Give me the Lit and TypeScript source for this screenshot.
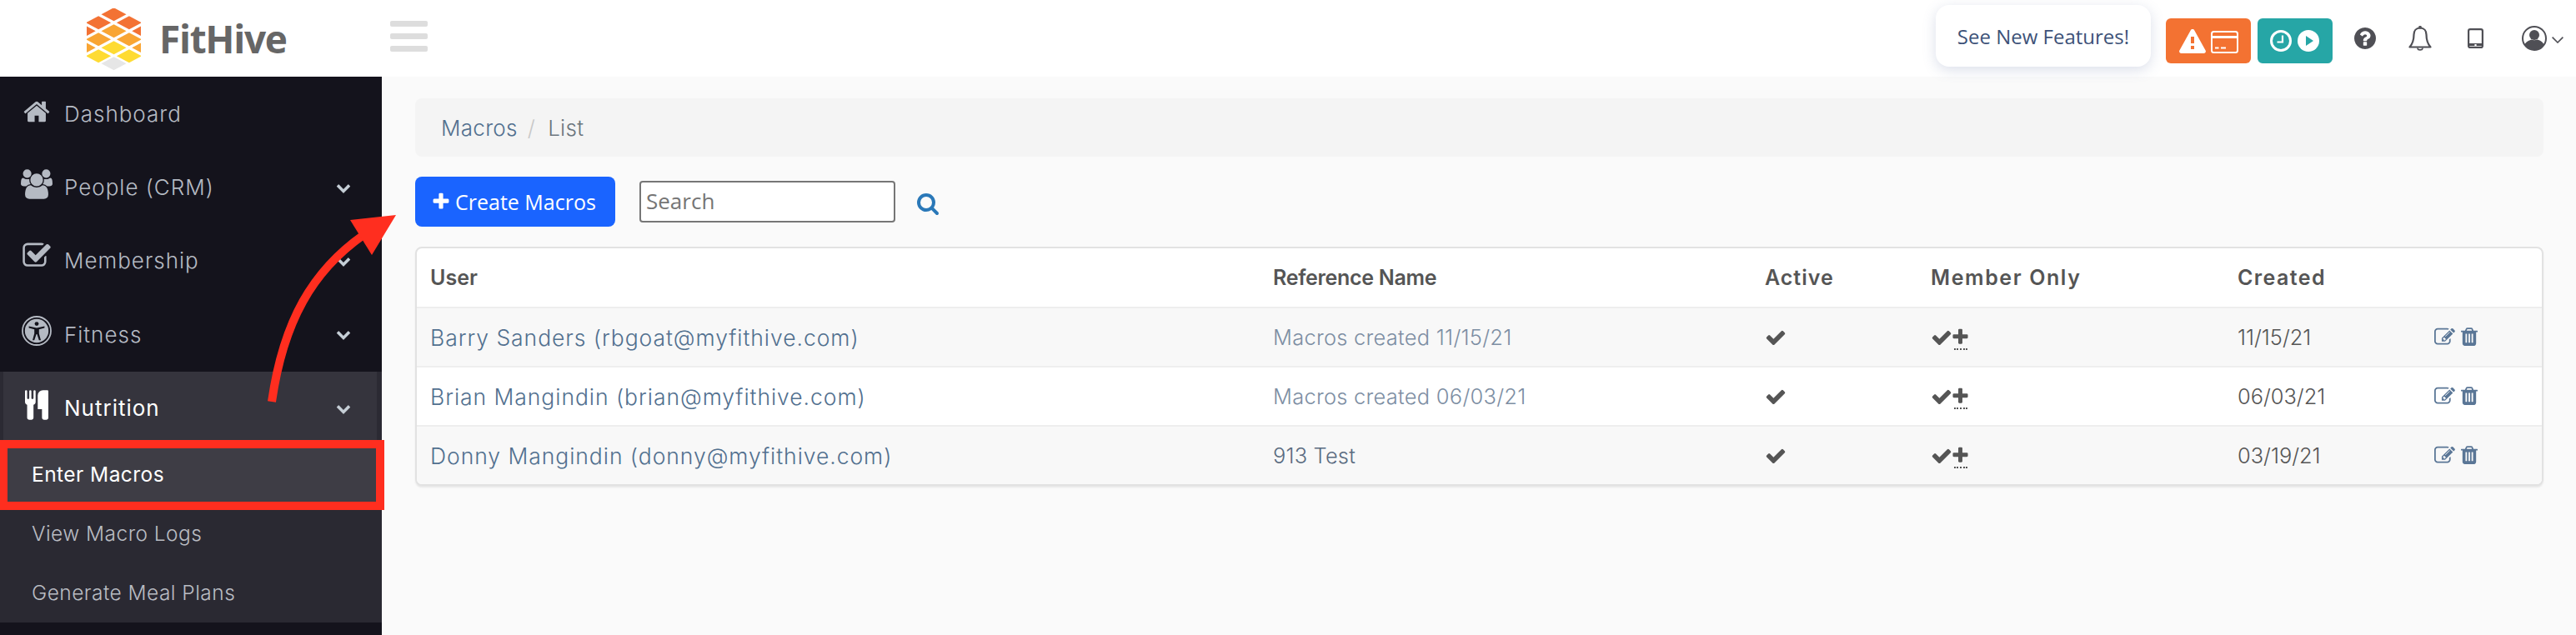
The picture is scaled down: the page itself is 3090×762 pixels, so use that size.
import { LitElement, html, svg, css } from "lit";
import { customElement } from "lit/decorators.js";

const P = {
  check: "M1671 566q0 40-28 68l-724 724-136 136q-28 28-68 28t-68-28l-136-136-362-362q-28-28-28-68t28-68l136-136q28-28 68-28t68 28l294 295 656-657q28-28 68-28t68 28l136 136q28 28 28 68z",
  plus: "M1600 736v192q0 40-28 68t-68 28h-416v416q0 40-28 68t-68 28h-192q-40 0-68-28t-28-68v-416h-416q-40 0-68-28t-28-68v-192q0-40 28-68t68-28h416v-416q0-40 28-68t68-28h192q40 0 68 28t28 68v416h416q40 0 68 28t28 68z",
  chev: "M1683 808l-742 741q-19 19-45 19t-45-19l-742-741q-19-19-19-45.5t19-45.5l166-165q19-19 45-19t45 19l531 531 531-531q19-19 45-19t45 19l166 165q19 19 19 45.5t-19 45.5z",
  home: "M1472 992v480q0 26-19 45t-45 19h-384v-384h-256v384h-384q-26 0-45-19t-19-45v-480q0-1 .5-3t.5-3l575-474 575 474q1 2 1 6zm223-69l-62 74q-8 9-21 11h-3q-13 0-21-7l-692-577-692 577q-12 8-24 7-13-2-21-11l-62-74q-8-10-7-23.5t11-21.5l719-599q32-26 76-26t76 26l244 204v-195q0-14 9-23t23-9h192q14 0 23 9t9 23v408l219 182q10 8 11 21.5t-7 23.5z",
  users: "M593 896q-162 5-265 128h-134q-82 0-138-40.5t-56-118.5q0-353 124-353 6 0 43.5 21t97.5 42.5 119 21.5q67 0 133-23-5 37-5 66 0 139 81 256zm1071 637q0 120-73 189.5t-194 69.5h-874q-121 0-194-69.5t-73-189.5q0-53 3.5-103.5t14-109 26.5-108.5 43-97.5 62-81 85.5-53.5 111.5-20q10 0 43 21.5t73 48 107 48 135 21.5 135-21.5 107-48 73-48 43-21.5q61 0 111.5 20t85.5 53.5 62 81 43 97.5 26.5 108.5 14 109 3.5 103.5zm-1024-1277q0 106-75 181t-181 75-181-75-75-181 75-181 181-75 181 75 75 181zm704 384q0 159-112.5 271.5t-271.5 112.5-271.5-112.5-112.5-271.5 112.5-271.5 271.5-112.5 271.5 112.5 112.5 271.5zm576 225q0 78-56 118.5t-138 40.5h-134q-103-123-265-128 81-117 81-256 0-29-5-66 66 23 133 23 59 0 119-21.5t97.5-42.5 43.5-21q124 0 124 353zm-128-609q0 106-75 181t-181 75-181-75-75-181 75-181 181-75 181 75 75 181z",
  checkSq: "M1472 930v318q0 119-84.5 203.5t-203.5 84.5h-832q-119 0-203.5-84.5t-84.5-203.5v-832q0-119 84.5-203.5t203.5-84.5h832q63 0 117 25 15 7 18 23 3 17-9 29l-49 49q-10 10-23 10-3 0-9-2-23-6-45-6h-832q-66 0-113 47t-47 113v832q0 66 47 113t113 47h832q66 0 113-47t47-113v-254q0-13 9-22l64-64q10-10 23-10 6 0 12 3 20 8 20 29zm231-489l-814 814q-24 24-57 24t-57-24l-430-430q-24-24-24-57t24-57l110-110q24-24 57-24t57 24l263 263 647-647q24-24 57-24t57 24l110 110q24 24 24 57t-24 57z",
  cutlery: "M640 64v640q0 61-35.5 111t-92.5 70v779q0 52-38 90t-90 38h-128q-52 0-90-38t-38-90v-779q-57-20-92.5-70t-35.5-111v-640q0-26 19-45t45-19 45 19 19 45v416q0 26 19 45t45 19 45-19 19-45v-416q0-26 19-45t45-19 45 19 19 45v416q0 26 19 45t45 19 45-19 19-45v-416q0-26 19-45t45-19 45 19 19 45zm768 0v1600q0 52-38 90t-90 38h-128q-52 0-90-38t-38-90v-512h-224q-13 0-22.5-9.5t-9.5-22.5v-800q0-132 94-226t226-94h256q26 0 45 19t19 45z",
  search: "M1216 832q0-185-131.5-316.5t-316.5-131.5-316.5 131.5-131.5 316.5 131.5 316.5 316.5 131.5 316.5-131.5 131.5-316.5zm512 832q0 52-38 90t-90 38q-54 0-90-38l-343-342q-179 124-399 124-143 0-273.5-55.5t-225-150-150-225-55.5-273.5 55.5-273.5 150-225 225-150 273.5-55.5 273.5 55.5 225 150 150 225 55.5 273.5q0 220-124 399l343 343q37 37 37 90z",
  question: "M1024 1376v-192q0-14-9-23t-23-9h-192q-14 0-23 9t-9 23v192q0 14 9 23t23 9h192q14 0 23-9t9-23zm256-672q0-88-55.5-163t-138.5-116-170-41q-243 0-371 213-15 24 8 42l132 100q7 6 19 6 16 0 25-12 53-68 86-92 34-24 86-24 48 0 85.5 26t37.5 59q0 38-20 61t-68 45q-63 28-115.5 86.5t-52.5 125.5v36q0 14 9 23t23 9h192q14 0 23-9t9-23q0-19 21.5-49.5t54.5-49.5q32-18 49-28.5t46-35 44.5-48 28-60.5 12.5-81zm384 192q0 209-103 385.5t-279.5 279.5-385.5 103-385.5-103-279.5-279.5-103-385.5 103-385.5 279.5-279.5 385.5-103 385.5 103 279.5 279.5 103 385.5z",
  trash: "M704 1376v-704q0-14-9-23t-23-9h-64q-14 0-23 9t-9 23v704q0 14 9 23t23 9h64q14 0 23-9t9-23zm256 0v-704q0-14-9-23t-23-9h-64q-14 0-23 9t-9 23v704q0 14 9 23t23 9h64q14 0 23-9t9-23zm256 0v-704q0-14-9-23t-23-9h-64q-14 0-23 9t-9 23v704q0 14 9 23t23 9h64q14 0 23-9t9-23zm-544-992h448l-48-117q-7-9-17-11h-317q-10 2-17 11zm928 32v64q0 14-9 23t-23 9h-96v948q0 83-47 143.5t-113 60.5h-832q-66 0-113-58.5t-47-141.5v-952h-96q-14 0-23-9t-9-23v-64q0-14 9-23t23-9h309l70-167q15-37 54-63t79-26h320q40 0 79 26t54 63l70 167h309q14 0 23 9t9 23z",
  edit: "M888 1184l116-116-152-152-116 116v56h96v96h56zm440-720q-16-16-33 1l-350 350q-17 17-1 33t33-1l350-350q17-17 1-33zm80 594v190q0 119-84.5 203.5t-203.5 84.5h-832q-119 0-203.5-84.5t-84.5-203.5v-832q0-119 84.5-203.5t203.5-84.5h832q63 0 117 25 15 7 18 23 3 17-9 29l-49 49q-14 14-32 8-23-6-45-6h-832q-66 0-113 47t-47 113v832q0 66 47 113t113 47h832q66 0 113-47t47-113v-126q0-13 9-22l64-64q15-15 35-7t20 29zm-96-738l288 288-672 672h-288v-288zm444 132l-92 92-288-288 92-92q28-28 68-28t68 28l152 152q28 28 28 68t-28 68z",
};

const fa = (d: string, cls: string, vb = "0 0 1792 1792") =>
  html`<svg class="ico ${cls}" viewBox=${vb} fill="currentColor"><path d=${d}></path></svg>`;

const dia = (x: number, y: number, c: string) =>
  svg`<polygon points="${x - 15},${y} ${x},${y - 8} ${x + 15},${y} ${x},${y + 8}" fill=${c}></polygon>`;

const logo = () => {
  const o = "#f37234", a = "#f9a533", y = "#fedb33", g = "#e6e6e6";
  const c = 32.5, d = 18.4;
  return html`<svg class="logo-mark" viewBox="0 0 65 74">
    ${dia(c, 7.2, o)}${dia(c - d, 17.2, o)}${dia(c + d, 17.2, o)}
    ${dia(c, 27.2, a)}${dia(c - 2 * d, 27.2, o)}${dia(c + 2 * d, 27.2, o)}
    ${dia(c - d, 37.2, a)}${dia(c + d, 37.2, a)}
    ${dia(c, 47.2, y)}${dia(c - 2 * d, 47.2, a)}${dia(c + 2 * d, 47.2, a)}
    ${dia(c - d, 57.2, y)}${dia(c + d, 57.2, y)}
    ${dia(c, 66.2, g)}
  </svg>`;
};

const access = html`<svg class="ico m-access" viewBox="0 0 36 36">
  <circle cx="18" cy="18" r="17" fill="none" stroke="currentColor" stroke-width="1.8"></circle>
  <circle cx="18" cy="18" r="14.2" fill="currentColor"></circle>
  <circle cx="18" cy="9.6" r="2.4" fill="#14131c"></circle>
  <path d="M8.6 12.4 18 14.4l9.4-2v2l-6.6 1.8v5l2.2 8h-2.2L18.4 22h-.8l-2.4 7.2H13l2.2-8v-5L8.6 14.4z" fill="#14131c"></path>
</svg>`;

const menu = [
  { label: "Dashboard", icon: fa(P.home, "m-home"), chev: false },
  { label: "People (CRM)", icon: fa(P.users, "m-users", "0 0 1920 1792"), chev: true },
  { label: "Membership", icon: fa(P.checkSq, "m-check"), chev: true },
  { label: "Fitness", icon: access, chev: true },
  { label: "Nutrition", icon: fa(P.cutlery, "m-cut", "0 0 1408 1792"), chev: true, open: true },
];

const rows = [
  { user: "Barry Sanders (rbgoat@myfithive.com)", ref: "Macros created 11/15/21", muted: true, date: "11/15/21" },
  { user: "Brian Mangindin (brian@myfithive.com)", ref: "Macros created 06/03/21", muted: true, date: "06/03/21" },
  { user: "Donny Mangindin (donny@myfithive.com)", ref: "913 Test", muted: false, date: "03/19/21" },
];

@customElement("app-root")
export class AppRoot extends LitElement {
  static styles = css`
    :host { display: block; position: relative; height: 762px; overflow: hidden; background: #fafafa;
      font-family: Inter, "Liberation Sans", sans-serif; color: #555; }
    * { box-sizing: border-box; }
    .ico { display: block; flex: none; }

    .top { display: flex; align-items: center; height: 92px; background: #fff; }
    .brand { display: flex; align-items: center; width: 458px; height: 100%; padding-left: 104px; }
    .logo-mark { width: 65px; height: 74px; margin-top: 1px; flex: none; }
    .logo-text { margin-left: 22px; font: 700 46px/1 "Open Sans", sans-serif; color: #666; letter-spacing: -1.3px; }
    .burger { display: flex; flex-direction: column; gap: 8px; width: 45px; margin-left: 10px; margin-bottom: 5px; }
    .burger span { display: block; height: 7px; border-radius: 2px; background: #ddd; }
    .tools { display: flex; align-items: center; margin-left: auto; padding-right: 15px; color: #4f4f55; }
    .news { width: 258px; height: 74px; margin-right: 18px; display: flex; align-items: center; justify-content: center;
      border-radius: 16px; background: #fff; box-shadow: 0 4px 16px rgba(90, 110, 160, .22);
      font: 400 24px "Open Sans", sans-serif; color: #3d5278; margin-top: -6px; }
    .btn-o, .btn-t { display: flex; align-items: center; height: 54px; border-radius: 6px; margin-top: 6px; color: #fff; }
    .btn-o { width: 102px; background: #f37232; padding-left: 16px; gap: 6px; }
    .btn-t { width: 90px; background: #26a6a6; margin-left: 8px; padding-left: 15px; gap: 7px; }
    .i-warn { width: 32px; height: 29px; margin-top: 1px; }
    .i-card { width: 33px; height: 27px; margin-top: 2px; }
    .i-clock, .i-play { width: 26px; height: 26px; }
    .i-q { width: 26px; height: 26px; margin-left: 26px; }
    .i-bell { width: 28px; height: 31px; margin-left: 39px; }
    .i-tablet { width: 19px; height: 24px; margin-left: 43px; }
    .i-user { width: 30px; height: 30px; margin-left: 46px; }
    .i-down { width: 14px; height: 8px; margin-left: 6px; margin-top: 3px; }

    .body { display: flex; height: 670px; }
    .side { width: 458px; flex: none; background: #14131c; color: #b5bac3; }
    .item { display: flex; align-items: center; height: 88.4px; padding: 0 37px 0 25px; font-size: 26px; letter-spacing: 1px; font-weight: 300; }
    .item.open { color: #fff; background: #35343d; border-left: 4px solid #2b2a33; border-right: 6px solid #2b2a33; padding: 0 31px 0 21px; font-weight: 400; }
    .mi { width: 38px; margin-right: 14px; display: flex; justify-content: center; flex: none; }
    .m-home { width: 34px; height: 34px; margin-bottom: 5px; }
    .m-users { width: 38px; height: 36px; margin-bottom: 8px; }
    .m-check { width: 36px; height: 36px; margin-bottom: 11px; }
    .m-access { width: 36px; height: 36px; margin-bottom: 8px; }
    .m-cut { width: 28px; height: 36px; margin-bottom: 7px; }
    .chev { width: 18px; height: 18px; margin-left: auto; color: #c5ced6; }
    .sub { background: #2a2932; }
    .sub-item { display: flex; align-items: center; height: 71px; padding-left: 38px; font-size: 24.5px; font-weight: 300; letter-spacing: .45px; color: #b9bcc2; }
    .sub-item.on { background: #3e3d45; color: #fff; font-weight: 400; }

    .main { flex: 1; min-width: 0; padding: 26px 39px 0 40px; }
    .crumb { display: flex; align-items: center; height: 70px; padding-left: 31px; border-radius: 8px; background: #f4f4f4; font-size: 26px; font-weight: 300; letter-spacing: .3px; }
    .crumb .a { color: #52708f; }
    .crumb .s { color: #c8c8c8; margin: 0 15px 0 12px; }
    .crumb .l { color: #6c757d; }
    .bar { display: flex; align-items: center; height: 60px; margin: 24px 0; }
    .create { display: flex; align-items: center; gap: 5px; width: 240px; height: 60px; padding-left: 22px; border: 0; border-radius: 8px; background: #1a64ff; color: #fff; font: 400 25px "Open Sans", sans-serif; }
    .create .ico { width: 24px; height: 24px; margin-left: -3px; }
    .search { width: 307px; height: 50px; margin-left: 29px; padding: 0 6px 3px; border: 2px solid #767676; border-radius: 4px; background: #fff; font: 400 26px "Open Sans", sans-serif; color: #555; outline: 0; }
    .search::placeholder { color: #757575; opacity: 1; }
    .go { width: 28px; height: 28px; margin-left: 25px; margin-top: 3px; color: #2a78b8; }

    .table { border: 2px solid #e2e2e2; border-radius: 8px; overflow: hidden; box-shadow: 0 2px 2px rgba(0, 0, 0, .08); background: #fff; }
    .row { display: grid; grid-template-columns: 1011px 590px 199px 368px 236px 1fr; align-items: center; height: 71px; padding-left: 16px; border-bottom: 2px solid #eee; font-size: 25.4px; font-weight: 300; }
    .row:nth-child(even) { background: #f8f8f8; }
    .row:last-child { border-bottom: 0; height: 69px; }
    .row.head { height: 72px; font-weight: 600; font-size: 25px; color: #555; }
    .h-ref { letter-spacing: -.3px; }
    .h-act { letter-spacing: 1px; }
    .h-mem { letter-spacing: 1.6px; }
    .h-cre { letter-spacing: 1.4px; }
    .u { color: #52708f; font-size: 26.5px; letter-spacing: .95px; }
    .r { color: #7d8ea3; letter-spacing: .3px; }
    .r.dark { color: #5a6b80; letter-spacing: .2px; }
    .cell-ic { display: flex; align-items: center; color: #555; }
    .k { width: 26px; height: 26px; }
    .pl { position: relative; }
    .pl .ico { width: 23px; height: 23px; margin-left: -2px; }
    .pl::after { content: ""; position: absolute; left: 2px; top: 25px; width: 16px; border-top: 2px dotted #555; }
    .acts { display: flex; align-items: center; gap: 7px; color: #5a7696; }
    .e { width: 25px; height: 25px; }
    .t { width: 20px; height: 23px; }

    .over { position: absolute; inset: 0; width: 100%; height: 100%; pointer-events: none; }
  `;

  render() {
    return html`
      <div class="top">
        <div class="brand">${logo()}<span class="logo-text">FitHive</span></div>
        <div class="burger"><span></span><span></span><span></span></div>
        <div class="tools">
          <div class="news">See New Features!</div>
          <div class="btn-o">
            <svg class="ico i-warn" viewBox="0 0 32 29"><path fill="#fff" fill-rule="evenodd" d="M16 0c1 0 1.800.5 2.300 1.400l13.300 24c.9 1.600-.2 3.600-2.100 3.600H2.500c-1.900 0-3-2-2.100-3.600l13.300-24C14.200.5 15 0 16 0zM14 9v8h4V9zm0 11v4h4v-4z"></path></svg>
            <svg class="ico i-card" viewBox="0 0 33 27" fill="none" stroke="#fff"><rect x="1" y="1" width="31" height="25" rx="2.500" stroke-width="2"></rect><path d="M1 7.500h31" stroke-width="3"></path><path d="M5 20.500h4.500M12 20.500h6" stroke-width="2"></path></svg>
          </div>
          <div class="btn-t">
            <svg class="ico i-clock" viewBox="0 0 26 26" fill="none" stroke="#fff" stroke-width="3"><circle cx="13" cy="13" r="11.500"></circle><path d="M15 6.500v8H8.500" stroke-width="2.200"></path></svg>
            <svg class="ico i-play" viewBox="0 0 26 26"><circle cx="13" cy="13" r="13" fill="#fff"></circle><path d="M10 7l9 6-9 6z" fill="#26a6a6"></path></svg>
          </div>
          ${fa(P.question, "i-q", "128 128 1536 1536")}
          <svg class="ico i-bell" viewBox="0 0 28 31" fill="none" stroke="currentColor" stroke-width="2.200" stroke-linejoin="round" stroke-linecap="round"><circle cx="14" cy="1.800" r=".8"></circle><path d="M14 2.500c-5 0-7.500 3.600-7.500 8 0 7-1.500 11-5 15h25c-3.500-4-5-8-5-15 0-4.400-2.500-8-7.500-8z"></path><path d="M11 27c.5 2.500 5.500 2.500 6 0" stroke-width="1.600"></path></svg>
          <svg class="ico i-tablet" viewBox="0 0 19 24" fill="none" stroke="currentColor" stroke-width="2.200"><rect x="1.100" y="1.100" width="16.800" height="21.800" rx="2"></rect><path d="M1 19.500h17" stroke-width="3"></path><rect x="8.400" y="19" width="2.200" height="2" fill="#fff" stroke="none"></rect></svg>
          <svg class="ico i-user" viewBox="0 0 30 30"><circle cx="15" cy="15" r="14" fill="#fff" stroke="currentColor" stroke-width="2"></circle><circle cx="15" cy="11" r="6" fill="currentColor"></circle><path d="M3.500 23c1-4 5-5.500 8-6.500 2 1 5 1 7 0 3 1 7 2.500 8 6.500-6 7.500-17 7.500-23 0z" fill="currentColor"></path></svg>
          <svg class="ico i-down" viewBox="0 0 14 8" fill="none" stroke="currentColor" stroke-width="1.600"><path d="M.6.600 7 7 13.400.6"></path></svg>
        </div>
      </div>
      <div class="body">
        <nav class="side">
          ${menu.map((m) => html`<div class="item ${m.open ? "open" : ""}">
            <span class="mi">${m.icon}</span><span>${m.label}</span>
            ${m.chev ? fa(P.chev, "chev") : ""}
          </div>`)}
          <div class="sub">
            <div class="sub-item on">Enter Macros</div>
            <div class="sub-item">View Macro Logs</div>
            <div class="sub-item">Generate Meal Plans</div>
          </div>
        </nav>
        <main class="main">
          <div class="crumb"><span class="a">Macros</span><span class="s">/</span><span class="l">List</span></div>
          <div class="bar">
            <button class="create">${fa(P.plus, "")}<span>Create Macros</span></button>
            <input class="search" placeholder="Search" />
            ${fa(P.search, "go")}
          </div>
          <div class="table">
            <div class="row head"><span>User</span><span class="h-ref">Reference Name</span><span class="h-act">Active</span><span class="h-mem">Member Only</span><span class="h-cre">Created</span><span></span></div>
            ${rows.map((r) => html`<div class="row">
              <span class="u">${r.user}</span>
              <span class="r ${r.muted ? "" : "dark"}">${r.ref}</span>
              <span class="cell-ic">${fa(P.check, "k")}</span>
              <span class="cell-ic">${fa(P.check, "k")}<span class="pl">${fa(P.plus, "")}</span></span>
              <span>${r.date}</span>
              <span class="acts">${fa(P.edit, "e")}${fa(P.trash, "t", "192 160 1408 1536")}</span>
            </div>`)}
          </div>
        </main>
      </div>
      <svg class="over">
        <rect x="4" y="533" width="452" height="74" fill="none" stroke="#ff2e1f" stroke-width="10"></rect>
        <path d="M326 482C340 385 375 325 436 282" fill="none" stroke="#ff2e1f" stroke-width="10"></path>
        <polygon points="475,258 420,264 446,306" fill="#ff2e1f"></polygon>
      </svg>
    `;
  }
}
